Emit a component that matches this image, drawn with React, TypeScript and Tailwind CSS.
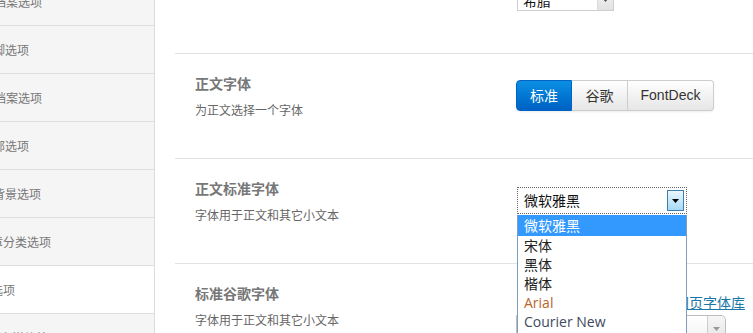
import React from 'react';

const cjk = { fontFamily: '"Noto Sans CJK SC", "Noto Sans", sans-serif' };

const sideItems = [
  { label: '文章档案选项', shift: '-ml-[30px]', active: false },
  { label: '页脚选项', shift: '-ml-[19px]', active: false },
  { label: '分类档案选项', shift: '-ml-[30px]', active: false },
  { label: '底部选项', shift: '-ml-[19px]', active: false },
  { label: '页面背景选项', shift: '-ml-[31px]', active: false },
  { label: '文章分类选项', shift: '-ml-[21px]', active: false },
  { label: '字体选项', shift: '-ml-[33px]', active: true },
  { label: '社交媒体外显', shift: '-ml-[12px]', active: false },
];

const fontOptions = [
  { label: '微软雅黑', color: 'text-white', selected: true },
  { label: '宋体', color: 'text-[#222]' },
  { label: '黑体', color: 'text-[#222]' },
  { label: '楷体', color: 'text-[#222]' },
  { label: 'Arial', color: 'text-[#b8652a]' },
  { label: 'Courier New', color: 'text-[#3e4a60]' },
  { label: 'Georgia', color: 'text-[#222]' },
  { label: 'Tahoma', color: 'text-[#222]' },
];

function Triangle({ className }: { className?: string }) {
  return (
    <svg className={className} width="7" height="4" viewBox="0 0 7 4">
      <path d="M0 0h7L3.5 4z" fill="currentColor" />
    </svg>
  );
}

function Sidebar() {
  return (
    <div className="w-[155px] shrink-0 border-r border-[#dcdcdc] bg-[#f5f5f5] overflow-hidden" style={cjk}>
      {sideItems.map((item, i) => (
        <div
          key={item.label}
          className={`h-[48px] border-b border-[#dedede] flex items-center text-[12px] text-[#777] whitespace-nowrap ${
            i === 0 ? '-mt-[22px]' : ''
          } ${item.active ? 'bg-white' : ''}`}
        >
          <span className={item.shift}>{item.label}</span>
        </div>
      ))}
    </div>
  );
}

function RowText({ title, desc }: { title: string; desc: string }) {
  return (
    <div className="w-[341px] shrink-0 pl-5 pt-[19px]">
      <div className="text-[14px] leading-[20px] font-bold text-[#777]">{title}</div>
      <div className="mt-[8px] text-[12px] leading-[18px] text-[#666]">{desc}</div>
    </div>
  );
}

export default function App() {
  return (
    <div className="h-[333px] w-[753px] overflow-hidden flex bg-white">
      <Sidebar />

      <div className="flex-1 min-w-0 pl-5 relative" style={cjk}>
        {/* 上一项（被滚动裁切） */}
        <div className="h-[54px] border-b border-[#e2e2e2] flex">
          <div className="w-[342px] shrink-0" />
          <div className="-mt-[11px] h-[22px] w-[97px] border border-[#cfcfcf] bg-white flex items-stretch">
            <span className="flex-1 pl-[5px] text-[14px] leading-[20px] text-[#111]">希腊</span>
            <span className="w-[16px] border-l border-[#dcdcdc] bg-gradient-to-b from-[#f4f4f4] to-[#e2e2e2] flex items-center justify-center">
              <Triangle className="text-[#555]" />
            </span>
          </div>
        </div>

        {/* 正文字体 */}
        <div className="h-[105px] border-b border-[#e2e2e2] flex">
          <RowText title="正文字体" desc="为正文选择一个字体" />
          <div className="pt-[26px]">
            <div className="flex h-[31px] rounded-[4px] shadow-[0_1px_2px_rgba(0,0,0,0.08)]">
              <button className="w-[56px] rounded-l-[4px] border border-[#0062c4] bg-gradient-to-b from-[#0b8fe2] to-[#0061c3] text-white text-[14px]">
                标准
              </button>
              <button className="w-[56px] border-y border-r border-[#cdcdcd] bg-gradient-to-b from-white to-[#e6e6e6] text-[#333] text-[14px]">
                谷歌
              </button>
              <button
                className="w-[86px] rounded-r-[4px] border-y border-r border-[#cdcdcd] bg-gradient-to-b from-white to-[#e6e6e6] text-[#333] text-[14px]"
                style={{ fontFamily: '"Liberation Sans", Arial, sans-serif' }}
              >
                FontDeck
              </button>
            </div>
          </div>
        </div>

        {/* 正文标准字体 */}
        <div className="h-[105px] border-b border-[#e2e2e2] flex">
          <RowText title="正文标准字体" desc="字体用于正文和其它小文本" />
          <div className="pt-[28px] relative">
            <div className="ml-[1px] h-[27px] w-[170px] border border-dotted border-[#666] bg-white flex items-center">
              <span className="flex-1 pl-[6px] text-[14px] text-[#111]">微软雅黑</span>
              <span className="mr-[2px] w-[17px] h-[21px] border border-[#3c7fb1] bg-gradient-to-b from-[#eaf6fd] to-[#a7d9f5] flex items-center justify-center">
                <Triangle className="text-black" />
              </span>
            </div>

            {/* 展开的下拉列表 */}
            <div className="absolute left-[1px] top-[56px] z-10 w-[170px] border border-t-0 border-[#7f9db9] bg-white">
              {fontOptions.map((o) => (
                <div
                  key={o.label}
                  className={`pl-[6px] text-[14px] leading-[19px] ${o.color} ${
                    o.selected ? 'h-[21px] pt-[1px] bg-[#3399ff]' : 'h-[19px]'
                  }`}
                  style={{ fontFamily: '"Open Sans", "Noto Sans CJK SC", sans-serif' }}
                >
                  {o.label}
                </div>
              ))}
            </div>
          </div>
        </div>

        {/* 标准谷歌字体 */}
        <div className="h-[105px] flex">
          <RowText title="标准谷歌字体" desc="字体用于正文和其它小文本" />
          <div className="pt-[25px] w-[229px]">
            <div className="text-right">
              <a href="#" className="text-[14px] leading-[20px] text-[#1a78a8] underline">
                浏览谷歌网页字体库
              </a>
            </div>
            <div className="mt-[2px] h-[28px] w-[210px] rounded-tr-[5px] border border-[#bdbdbd] bg-gradient-to-b from-white to-[#f0f0f0] flex">
              <span className="flex-1" />
              <span className="w-[18px] border-l border-[#cdcdcd] bg-gradient-to-b from-[#f6f6f6] to-[#e4e4e4] flex items-center justify-center rounded-tr-[5px]">
                <Triangle className="text-[#999]" />
              </span>
            </div>
          </div>
        </div>
      </div>
    </div>
  );
}
